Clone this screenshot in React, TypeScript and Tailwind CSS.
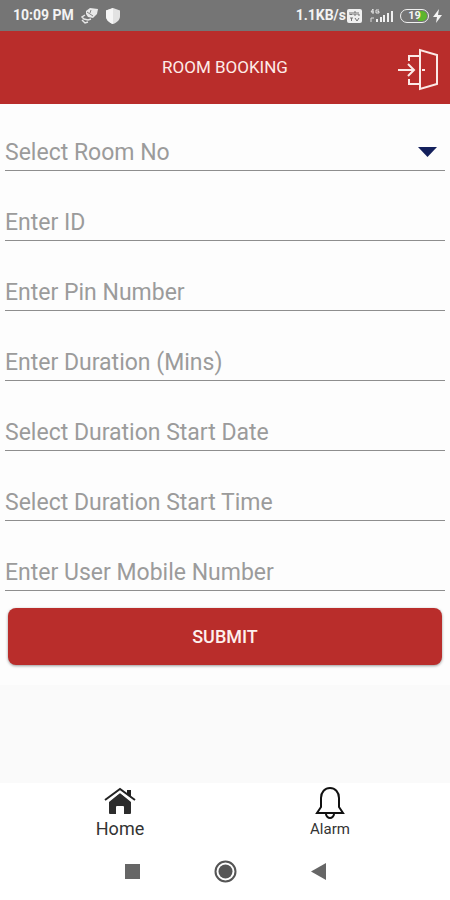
import React, { useState } from "react";

const fieldClass =
  "block h-[38px] w-full appearance-none rounded-none border-b border-[#8e8e8e] bg-transparent p-0 text-[23px] outline-none placeholder:text-[#9b9b9b] placeholder:opacity-100";

const fields = [
  { id: "user-id", label: "Enter ID", mode: "text" },
  { id: "pin", label: "Enter Pin Number", mode: "numeric" },
  { id: "duration", label: "Enter Duration (Mins)", mode: "numeric" },
  { id: "start-date", label: "Select Duration Start Date", mode: "text" },
  { id: "start-time", label: "Select Duration Start Time", mode: "text" },
  { id: "mobile", label: "Enter User Mobile Number", mode: "tel" },
] as const;

function StatusBar() {
  return (
    <div className="flex h-[31px] items-center justify-between bg-[#757575] pr-2 pl-[13px] text-[14px] font-bold text-[#f3f3f3]">
      <div className="flex items-center gap-[7px]">
        <span>10:09 PM</span>
        <svg width="17" height="16" viewBox="0 0 17 16" aria-hidden="true">
          <path d="M5 3 9 0l8 1-1 5-4 4-5-1-2-3Z" fill="#e9e9e9" />
          <path d="M6 4l6 4M10 2l-1 3" fill="none" stroke="#858585" />
          <path d="M4 7 1 9l2 2 4 1 3-1M1 12l3 3 3-1" fill="none" stroke="#e6e6e6" strokeWidth="1.500" />
        </svg>
        <svg width="16" height="18" viewBox="0 0 16 18" aria-hidden="true">
          <path d="M8 1 15 3.500V9c0 4-3 6.500-7 8-4-1.500-7-4-7-8V3.500Z" fill="#e2e2e2" />
          <path d="M8 1v16c-4-1.500-7-4-7-8V3.500Z" fill="#f5f5f5" />
        </svg>
      </div>
      <div className="flex items-center">
        <span>1.1KB/s</span>
        <svg className="ml-px" width="15" height="14" viewBox="0 0 15 14" aria-hidden="true">
          <rect width="15" height="14" rx="2" fill="#f0f0f0" />
          <path d="M3 3v3l1-1 1 1V3M7 3v3h2V3H7M11 3v3h2M3 9h3M4.500 9v3M8 9l2 3 2-3" fill="none" stroke="#757575" />
        </svg>
        <svg className="ml-2" width="24" height="16" viewBox="0 0 24 16" aria-hidden="true">
          <path d="M3 1 1 4h3M3 1v5M9 2H6v3h3V3.500H7.500" fill="none" stroke="#e6e6e6" />
          <path d="M1 14v-4h3" fill="none" stroke="#dcdcdc" />
          <path d="M6 11h2v3H6zM10 9h2v5h-2zM13 7h2v7h-2zM17 5h2v9h-2zM21 3h2v11h-2z" fill="#f0f0f0" />
        </svg>
        <span className="relative ml-[6px] flex h-[14px] w-[29px] items-center justify-center rounded-full border border-[#f0f0f0] text-[11px] leading-none">
          <span className="absolute inset-y-px right-px w-[9px] rounded-r-full bg-[#5db52d]" />
          <span className="relative">19</span>
        </span>
        <svg className="ml-1" width="9" height="14" viewBox="0 0 9 14" aria-hidden="true">
          <path d="M6 0 0 8h4l-1 6 6-8H5Z" fill="#f5f5f5" />
        </svg>
      </div>
    </div>
  );
}

function ExitIcon() {
  return (
    <svg width="42" height="44" viewBox="0 0 42 44" fill="none" stroke="#fbe9e6" strokeWidth="2" aria-hidden="true">
      <path d="M23 2v39l17-5V7Z" />
      <path d="M22 8H12v5M12 31v5h10" />
      <path d="M1 22h15M11 16l6 6-6 6" />
      <path d="M25 22h3" />
    </svg>
  );
}

export default function App() {
  const [room, setRoom] = useState("");
  return (
    <div className="flex min-h-screen flex-col bg-[#fafafa] font-[Roboto,sans-serif]">
      <StatusBar />
      <header className="grid h-[73px] grid-cols-[1fr_auto_1fr] items-center bg-[#b92d2b] px-[11px]">
        <h1 className="col-start-2 text-[17px] text-[#fdebe8]">ROOM BOOKING</h1>
        <button type="button" aria-label="Log out" className="mt-1 justify-self-end">
          <ExitIcon />
        </button>
      </header>

      <form className="bg-[#fdfdfd] px-[5px] pt-[29px] pb-5" onSubmit={(e) => e.preventDefault()}>
        <div className="flex flex-col gap-8">
          <div className="relative">
            <select
              id="room"
              aria-label="Select Room No"
              value={room}
              onChange={(e) => setRoom(e.target.value)}
              className={fieldClass + " pt-[3px] text-[#9b9b9b]"}
            >
              <option value="">Select Room No</option>
            </select>
            <svg className="pointer-events-none absolute top-[13px] right-2" width="19" height="11" viewBox="0 0 19 11" aria-hidden="true">
              <path d="M0 1h19L9.500 11Z" fill="#14205c" />
            </svg>
          </div>
          {fields.map((f) => (
            <input
              key={f.id}
              id={f.id}
              type="text"
              inputMode={f.mode}
              aria-label={f.label}
              placeholder={f.label}
              className={fieldClass + " pt-[2px] text-[#444]"}
            />
          ))}
        </div>
        <div className="px-[3px] pt-[17px]">
          <button
            type="submit"
            className="h-[57px] w-full rounded-lg bg-[#b92d2b] text-[18px] font-medium text-[#fdf0ee] shadow-[0_1px_3px_rgba(0,0,0,0.4)]"
          >
            SUBMIT
          </button>
        </div>
      </form>

      <footer className="mt-auto bg-white">
        <nav className="flex h-[61px] px-[15px] text-[#333]">
          <a href="#home" className="flex flex-1 flex-col items-center pt-1 text-[18px] leading-5">
            <svg width="32" height="32" viewBox="0 0 32 32" aria-hidden="true">
              <path d="M23 3h4v8l-4-3Z" fill="#222" />
              <path d="M16 6 27 15v11q0 1-1 1h-6v-7q0-1-1-1h-6q-1 0-1 1v7H6q-1 0-1-1V15Z" fill="#2d2d2d" />
              <path d="M1 15 16 4l15 11" fill="none" stroke="#fff" strokeWidth="3" />
              <path d="M1 13 16 2l15 11" fill="none" stroke="#222" strokeWidth="2" />
            </svg>
            <span>Home</span>
          </a>
          <a href="#alarm" className="flex flex-1 flex-col items-center pt-1 text-[15px] leading-5">
            <svg width="30" height="32" viewBox="0 0 30 32" fill="none" stroke="#111" strokeWidth="2" aria-hidden="true">
              <path d="M6 20V11c0-6 4-10 9-10s9 4 9 10v9l4 6H2Z" />
              <path d="M11 27c0 2 2 4 4 4s4-2 4-4" />
            </svg>
            <span>Alarm</span>
          </a>
        </nav>
        <div className="flex h-14 items-center justify-center pb-[2px]">
          <button type="button" aria-label="Recent apps" className="flex w-[93px] justify-center">
            <svg width="15" height="15" viewBox="0 0 15 15" aria-hidden="true">
              <path d="M0 0h15v15H0Z" fill="#666" />
            </svg>
          </button>
          <button type="button" aria-label="Home screen" className="flex w-[93px] justify-center">
            <svg width="23" height="23" viewBox="0 0 23 23" aria-hidden="true">
              <circle cx="11.500" cy="11.500" r="10" fill="none" stroke="#555" strokeWidth="2" />
              <circle cx="11.500" cy="11.500" r="7" fill="#555" />
            </svg>
          </button>
          <button type="button" aria-label="Back" className="flex w-[93px] justify-center">
            <svg width="15" height="17" viewBox="0 0 15 17" aria-hidden="true">
              <path d="M0 8.500 15 0v17Z" fill="#666" />
            </svg>
          </button>
        </div>
      </footer>
    </div>
  );
}
